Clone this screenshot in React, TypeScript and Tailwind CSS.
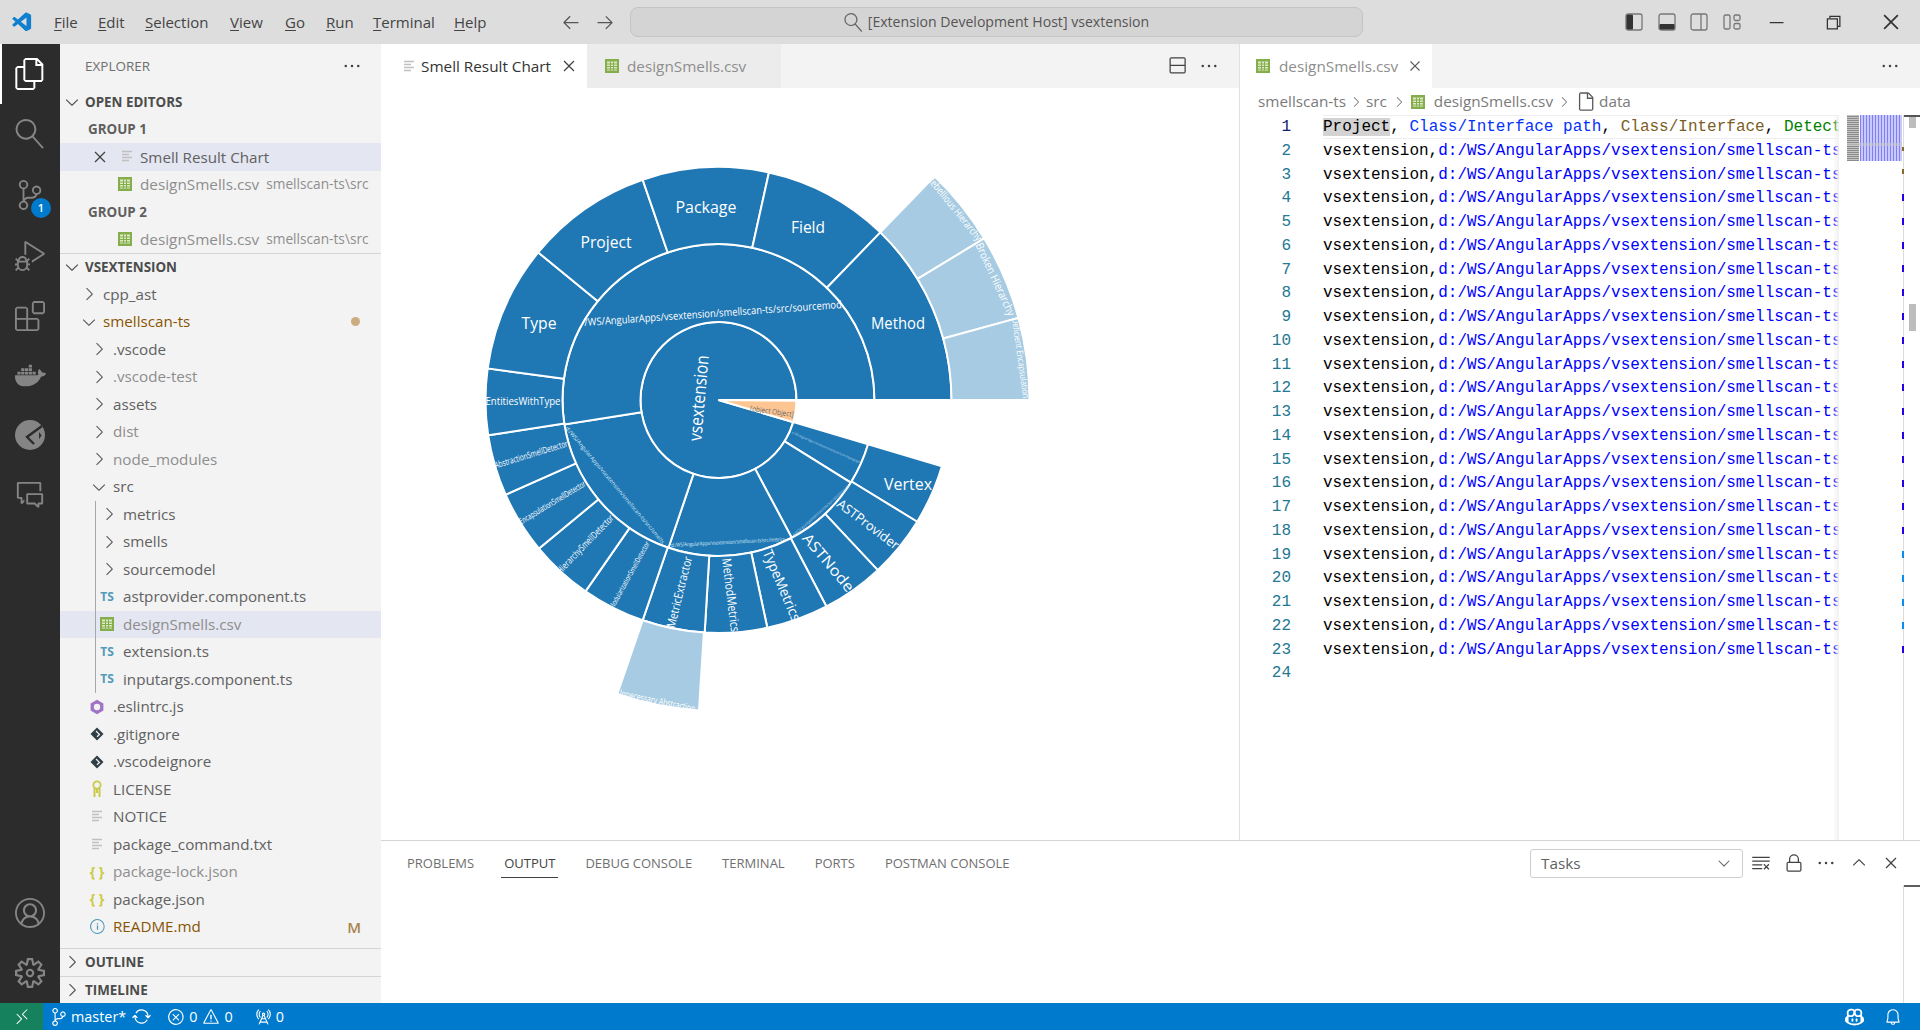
import React from 'react';
import {
  VscVscode, VscFiles, VscSearch, VscSourceControl, VscDebugAlt, VscExtensions, VscAccount, VscSettingsGear,
  VscChevronRight, VscChevronDown, VscChevronUp, VscClose, VscEllipsis, VscArrowLeft, VscArrowRight,
  VscChromeMinimize, VscChromeRestore, VscChromeClose, VscSplitVertical, VscLock, VscClearAll, VscRemote,
  VscSync, VscError, VscWarning, VscRadioTower, VscBell, VscCopilot, VscFile, VscCommentDiscussion, VscInfo,
} from 'react-icons/vsc';
import { FaDocker } from 'react-icons/fa';

const ui = "font-['Open_Sans',sans-serif]";

const CsvIcon = () => (
  <svg width="14" height="14" viewBox="0 0 14 14" className="shrink-0">
    <rect width="14" height="14" fill="#84ad4b" />
    <rect x="2" y="2.5" width="10" height="9" fill="#dfe9c8" />
    <path d="M2 5h10M2 7.5h10M2 10h10M5.5 2.5v9M8.5 2.5v9" stroke="#84ad4b" strokeWidth="1" />
  </svg>
);

const LinesIcon = () => (
  <svg width="12" height="13" viewBox="0 0 12 13" className="shrink-0">
    <path d="M1 1.5h10M1 4.5h7M1 7.5h10M1 10.5h7" stroke="#c0c0c0" strokeWidth="1.6" />
  </svg>
);

const TsIcon = () => <span className="text-[12px] font-bold leading-none text-[#519aba]">TS</span>;
const JsonIcon = () => <span className="text-[14px] font-bold leading-none text-[#cbcb41]">{'{ }'}</span>;

const GitIcon = () => (
  <svg width="14" height="14" viewBox="0 0 14 14">
    <path d="M7 0.5L13.5 7 7 13.5 0.5 7z" fill="#2f3d44" />
    <path d="M6 4l3.5 3.5L7 9.8" stroke="#f3f3f3" strokeWidth="1.2" fill="none" />
  </svg>
);

const EslintIcon = () => (
  <svg width="16" height="16" viewBox="0 0 16 16">
    <path d="M8 0.8L14.4 4.4V11.6L8 15.2 1.6 11.6V4.4z" fill="#a074c4" />
    <circle cx="8" cy="8" r="3.2" fill="#f3f3f3" />
  </svg>
);

const KeyIcon = () => (
  <svg width="12" height="18" viewBox="0 0 12 18">
    <circle cx="6" cy="5" r="3.6" fill="none" stroke="#c9c94a" strokeWidth="1.8" />
    <path d="M3.5 8v9M8.5 8v9M6 8v5" stroke="#c9c94a" strokeWidth="2" />
  </svg>
);

// activity bar glyphs the icon set does not carry
const PostmanIcon = () => (
  <svg width="30" height="30" viewBox="0 0 30 30">
    <circle cx="15" cy="15" r="15" fill="#858585" />
    <path d="M27 6L12 17l7 7" stroke="#2c2c2c" strokeWidth="2.4" fill="none" />
    <path d="M24 12l2.6 3.5L24 19z" fill="#2c2c2c" />
  </svg>
);

const LayoutIcon = ({ kind }: { kind: 'left' | 'bottom' | 'right' | 'custom' }) => (
  <svg width="18" height="18" viewBox="0 0 18 18">
    {kind === 'custom' ? (
      <>
        <rect x="1" y="2" width="6" height="14" rx="1.5" fill="none" stroke="#777" strokeWidth="1.3" />
        <rect x="11" y="2" width="6" height="5.5" rx="1.5" fill="none" stroke="#777" strokeWidth="1.3" />
        <rect x="11" y="10.5" width="6" height="5.5" rx="1.5" fill="none" stroke="#777" strokeWidth="1.3" />
      </>
    ) : (
      <>
        {kind === 'left' && <rect x="1" y="1" width="7" height="16" rx="1.5" fill="#333" />}
        {kind === 'bottom' && <rect x="1" y="11" width="16" height="6" rx="1.5" fill="#333" />}
        <rect x="1" y="1" width="16" height="16" rx="2" fill="none" stroke="#777" strokeWidth="1.3" />
        {kind === 'right' && <path d="M11 1v16" stroke="#777" strokeWidth="1.3" />}
      </>
    )}
  </svg>
);

const menus = [
  { k: 'F', r: 'ile', w: 'w-[44px]' },
  { k: 'E', r: 'dit', w: 'w-[47px]' },
  { k: 'S', r: 'election', w: 'w-[85px]' },
  { k: 'V', r: 'iew', w: 'w-[55px]' },
  { k: 'G', r: 'o', w: 'w-[41px]' },
  { k: 'R', r: 'un', w: 'w-[47px]' },
  { k: 'T', r: 'erminal', w: 'w-[81px]' },
  { k: 'H', r: 'elp', w: 'w-[40px]' },
];

const TitleBar = () => (
  <div className="flex h-[44px] shrink-0 items-center bg-[#dddddd] text-[15px] text-[#444444]">
    <div className="flex w-[54px] shrink-0 justify-center pr-[10px]">
      <VscVscode size={23} className="text-[#0f7fd0]" />
    </div>
    {menus.map(m => (
      <div key={m.k} className={`${m.w} shrink-0`}>
        <span className="underline underline-offset-2">{m.k}</span>
        {m.r}
      </div>
    ))}
    <div className="ml-[60px] flex w-[34px] shrink-0 justify-center">
      <VscArrowLeft size={20} className="text-[#555]" />
    </div>
    <div className="flex w-[34px] shrink-0 justify-center">
      <VscArrowRight size={20} className="text-[#555]" />
    </div>
    <div className="ml-[8px] flex h-[30px] w-[733px] shrink-0 items-center justify-center gap-[5px] rounded-lg border border-[#c4c4c4] bg-[#d4d4d4] text-[14.1px] text-[#555]">
      <VscSearch size={19} className="-scale-x-100 text-[#666]" />
      <span>[Extension Development Host] vsextension</span>
    </div>
    <div className="ml-auto flex h-full items-center">
      <div className="mr-[7px] flex w-[116px] justify-between">
        <LayoutIcon kind="left" />
        <LayoutIcon kind="bottom" />
        <LayoutIcon kind="right" />
        <LayoutIcon kind="custom" />
      </div>
      <div className="flex w-[56px] justify-center"><VscChromeMinimize size={20} className="text-[#333]" /></div>
      <div className="flex w-[58px] justify-center"><VscChromeRestore size={20} className="text-[#333]" /></div>
      <div className="flex w-[58px] justify-center"><VscChromeClose size={22} className="text-[#333]" /></div>
    </div>
  </div>
);

const ActivityBar = () => (
  <div className="flex w-[60px] shrink-0 flex-col items-center bg-[#2c2c2c] text-[#858585]">
    <div className="flex h-[60px] w-full items-center justify-center border-l-2 border-white pr-[2px] text-white">
      <VscFiles size={32} />
    </div>
    <div className="flex h-[60px] items-center justify-center"><VscSearch size={30} className="-scale-x-100" /></div>
    <div className="relative flex h-[62px] items-center justify-center">
      <VscSourceControl size={30} />
      <span className="absolute right-[-6px] bottom-[8px] flex h-[20px] w-[20px] items-center justify-center rounded-full bg-[#007acc] text-[11px] font-semibold text-white">1</span>
    </div>
    <div className="flex h-[60px] items-center justify-center"><VscDebugAlt size={30} /></div>
    <div className="flex h-[60px] items-center justify-center"><VscExtensions size={30} /></div>
    <div className="flex h-[58px] items-center justify-center"><FaDocker size={31} /></div>
    <div className="flex h-[62px] items-center justify-center"><PostmanIcon /></div>
    <div className="flex h-[58px] items-center justify-center"><VscCommentDiscussion size={30} /></div>
    <div className="mt-auto flex h-[60px] items-center justify-center"><VscAccount size={30} /></div>
    <div className="flex h-[60px] items-center justify-center"><VscSettingsGear size={30} /></div>
  </div>
);

type TreeItem = {
  name: string;
  pad: string;
  chevron?: 'open' | 'closed';
  icon?: React.ReactNode;
  text?: string;
  bg?: string;
  badge?: React.ReactNode;
};

const gray = 'text-[#8e8e8e]';
const mod = 'text-[#895503]';

const tree: TreeItem[] = [
  { name: 'cpp_ast', pad: 'pl-[19px]', chevron: 'closed' },
  { name: 'smellscan-ts', pad: 'pl-[19px]', chevron: 'open', text: mod, badge: <span className="mr-[21px] h-[9px] w-[9px] rounded-full bg-[#c9ac80]" /> },
  { name: '.vscode', pad: 'pl-[29px]', chevron: 'closed' },
  { name: '.vscode-test', pad: 'pl-[29px]', chevron: 'closed', text: gray },
  { name: 'assets', pad: 'pl-[29px]', chevron: 'closed' },
  { name: 'dist', pad: 'pl-[29px]', chevron: 'closed', text: gray },
  { name: 'node_modules', pad: 'pl-[29px]', chevron: 'closed', text: gray },
  { name: 'src', pad: 'pl-[29px]', chevron: 'open' },
  { name: 'metrics', pad: 'pl-[39px]', chevron: 'closed' },
  { name: 'smells', pad: 'pl-[39px]', chevron: 'closed' },
  { name: 'sourcemodel', pad: 'pl-[39px]', chevron: 'closed' },
  { name: 'astprovider.component.ts', pad: 'pl-[37px]', icon: <TsIcon /> },
  { name: 'designSmells.csv', pad: 'pl-[37px]', icon: <CsvIcon />, text: gray, bg: 'bg-[#e4e6f1]' },
  { name: 'extension.ts', pad: 'pl-[37px]', icon: <TsIcon /> },
  { name: 'inputargs.component.ts', pad: 'pl-[37px]', icon: <TsIcon /> },
  { name: '.eslintrc.js', pad: 'pl-[27px]', icon: <EslintIcon /> },
  { name: '.gitignore', pad: 'pl-[27px]', icon: <GitIcon /> },
  { name: '.vscodeignore', pad: 'pl-[27px]', icon: <GitIcon /> },
  { name: 'LICENSE', pad: 'pl-[27px]', icon: <KeyIcon /> },
  { name: 'NOTICE', pad: 'pl-[27px]', icon: <LinesIcon /> },
  { name: 'package_command.txt', pad: 'pl-[27px]', icon: <LinesIcon /> },
  { name: 'package-lock.json', pad: 'pl-[27px]', icon: <JsonIcon />, text: gray },
  { name: 'package.json', pad: 'pl-[27px]', icon: <JsonIcon /> },
  { name: 'README.md', pad: 'pl-[27px]', icon: <VscInfo size={17} className="text-[#519aba]" />, text: mod, badge: <span className="mr-[20px] text-[15px] font-semibold text-[#a8834f]">M</span> },
];

const SectionHeader = ({ title, open, border }: { title: string; open?: boolean; border?: boolean }) => (
  <div className={`flex h-[27.5px] shrink-0 items-center pl-[2px] text-[13.4px] font-bold text-[#4c4c4c] ${border ? 'border-t border-[#d4d4d4]' : ''}`}>
    {open ? <VscChevronDown size={20} /> : <VscChevronRight size={20} />}
    <span className="ml-[3px]">{title}</span>
  </div>
);

const GroupLabel = ({ title }: { title: string }) => (
  <div className="flex h-[27.5px] shrink-0 items-center pl-[28px] text-[13.4px] font-bold text-[#5f5f5f]">{title}</div>
);

const OpenCsvRow = () => (
  <div className="flex h-[27.5px] shrink-0 items-center pl-[58px] text-[15.3px] text-[#8e8e8e]">
    <CsvIcon />
    <span className="ml-[8px] whitespace-nowrap">designSmells.csv</span>
    <span className="ml-[7px] whitespace-nowrap text-[13.7px]">smellscan-ts\src</span>
  </div>
);

const Sidebar = () => (
  <div className="flex w-[321px] shrink-0 flex-col overflow-hidden bg-[#f3f3f3] text-[15.2px] text-[#616161]">
    <div className="flex h-[44px] shrink-0 items-center justify-between pr-[19px] pl-[25px] text-[13.5px] text-[#6f6f6f]">
      <span>EXPLORER</span>
      <VscEllipsis size={20} className="text-[#424242]" />
    </div>
    <SectionHeader title="OPEN EDITORS" open />
    <GroupLabel title="GROUP 1" />
    <div className="flex h-[27.5px] shrink-0 items-center bg-[#e4e6f1] pl-[30px]">
      <VscClose size={20} className="text-[#424242]" />
      <span className="ml-[11px]"><LinesIcon /></span>
      <span className="ml-[7px] pt-[1px]">Smell Result Chart</span>
    </div>
    <OpenCsvRow />
    <GroupLabel title="GROUP 2" />
    <OpenCsvRow />
    <SectionHeader title="VSEXTENSION" open border />
    <div className="relative flex min-h-0 flex-1 flex-col overflow-hidden">
      <div className="absolute top-[220px] left-[35px] h-[192px] w-px bg-[#a8a8a8]" />
      {tree.map(row => (
        <div key={row.name} className={`flex h-[27.5px] shrink-0 items-center ${row.pad} ${row.bg ?? ''} ${row.text ?? ''}`}>
          <span className="flex w-[20px] shrink-0 justify-center text-[#5a5a5a]">
            {row.chevron === 'open' && <VscChevronDown size={20} />}
            {row.chevron === 'closed' && <VscChevronRight size={20} />}
            {row.icon}
          </span>
          <span className={`whitespace-nowrap ${row.chevron ? 'ml-[4px]' : 'ml-[6px]'}`}>{row.name}</span>
          {row.badge && <span className="ml-auto flex items-center">{row.badge}</span>}
        </div>
      ))}
    </div>
    <SectionHeader title="OUTLINE" border />
    <SectionHeader title="TIMELINE" border />
  </div>
);

// Sunburst geometry, in page coordinates (the svg's viewBox starts at the chart's page offset)
const CX = 718.5;
const CY = 400;

const wedge = (r0: number, r1: number, a0: number, a1: number) => {
  const rad = (d: number) => (d * Math.PI) / 180;
  const pt = (r: number, a: number) => `${(CX + r * Math.cos(rad(a))).toFixed(2)} ${(CY + r * Math.sin(rad(a))).toFixed(2)}`;
  const large = a1 - a0 > 180 ? 1 : 0;
  if (r0 === 0) return `M${CX} ${CY}L${pt(r1, a0)}A${r1} ${r1} 0 ${large} 1 ${pt(r1, a1)}Z`;
  return `M${pt(r0, a0)}L${pt(r1, a0)}A${r1} ${r1} 0 ${large} 1 ${pt(r1, a1)}L${pt(r0, a1)}A${r0} ${r0} 0 ${large} 0 ${pt(r0, a0)}Z`;
};

const BLUE = '#1f77b4';
const LIGHT = '#a6cbe2';

const ring2 = [[16.5, 32], [32, 62], [62, 108.7], [108.7, 171], [171, 360]];
const ring3 = [16.5, 31.5, 46.9, 62.4, 77.9, 93.4, 109, 124.8, 140.4, 156, 171.3, 187.8, 219.3, 251, 282.5, 314, 360];
const ring4 = [[93.6, 109], [314, 328.7], [328.7, 344.7], [344.7, 360]];

type Label = { t: string; x: number; y: number; r: number; s: number; w: number; f?: string };

const labels: Label[] = [
  { t: 'Package', x: 706, y: 207, r: 0, s: 16, w: 61 },
  { t: 'Project', x: 606, y: 242, r: 0, s: 16, w: 51 },
  { t: 'Field', x: 808, y: 227, r: 0, s: 16, w: 34 },
  { t: 'Type', x: 539, y: 323, r: 0, s: 16, w: 35 },
  { t: 'Method', x: 898, y: 323, r: 0, s: 16, w: 54 },
  { t: 'EntitiesWithType', x: 523, y: 400.5, r: 0, s: 10.5, w: 75 },
  { t: '/WS/AngularApps/vsextension/smellscan-ts/src/sourcemod', x: 713, y: 313, r: -4, s: 10.5, w: 258 },
  { t: 'vsextension', x: 698, y: 398, r: -85, s: 18, w: 86 },
  { t: '[object Object]', x: 772, y: 411, r: 8, s: 7.5, w: 44, f: '#666' },
  { t: 'Rebellious Hierarchy', x: 955, y: 208, r: 51, s: 10, w: 80 },
  { t: 'Broken Hierarchy', x: 996, y: 279, r: 65, s: 11, w: 79 },
  { t: 'Deficient Encapsulation', x: 1021, y: 358, r: 82, s: 9, w: 81 },
  { t: 'Unnecessary Abstraction', x: 656, y: 700, r: 12, s: 10, w: 80 },
  { t: 'Vertex', x: 908, y: 483, r: 0, s: 17, w: 48 },
  { t: 'ASTProvider', x: 868.5, y: 524, r: 37, s: 13, w: 74 },
  { t: 'ASTNode', x: 829, y: 562, r: 50, s: 15, w: 71 },
  { t: 'TypeMetrics', x: 782.5, y: 585, r: 67, s: 14, w: 76 },
  { t: 'MethodMetrics', x: 731, y: 595, r: 83, s: 12.5, w: 74 },
  { t: 'MetricExtractor', x: 679, y: 592, r: -76, s: 12, w: 73 },
  { t: 'AbstractionSmellDetector', x: 531, y: 454, r: -17, s: 9, w: 76 },
  { t: 'EncapsulationSmellDetector', x: 552, y: 502, r: -31, s: 8.5, w: 76 },
  { t: 'HierarchySmellDetector', x: 585, y: 544, r: -46, s: 9.5, w: 77 },
  { t: 'ModularizationSmellDetector', x: 629, y: 575, r: -61, s: 7.5, w: 76 },
  { t: 'd:/WS/AngularApps/vsextension/smellscan-ts/src/smells', x: 615, y: 485, r: 50, s: 5.5, w: 151, f: '#dcebf5' },
  { t: 'd:/WS/AngularApps/vsextension/smellscan-ts/src/metrics', x: 728, y: 542, r: -3, s: 5.5, w: 114, f: '#dcebf5' },
  { t: 'd:/WS/AngularApps/vsextension/smellscan-ts/src/astprovider', x: 821, y: 510, r: -42, s: 4.5, w: 75, f: '#b5d3e8' },
  { t: 'd:/WS/AngularApps/vsextension/smellscan-ts/src/hypergraph', x: 826, y: 447, r: 23.7, s: 3.5, w: 74, f: '#b5d3e8' },
];

const Sunburst = () => (
  <svg viewBox="381 88 858 752" className="h-full w-full font-['Open_Sans',sans-serif]">
    <g stroke="#ffffff" strokeWidth="2">
      <path d={wedge(0, 78, 16.5, 360)} fill={BLUE} />
      <path d={wedge(0, 78, 0.5, 16.5)} fill="#fdc592" />
      {ring2.map(([a, b]) => <path key={a} d={wedge(78, 156, a, b)} fill={BLUE} />)}
      {ring3.slice(0, -1).map((a, i) => <path key={a} d={wedge(156, 233, a, ring3[i + 1])} fill={BLUE} />)}
      {ring4.map(([a, b]) => <path key={a} d={wedge(233, 311, a, b)} fill={LIGHT} />)}
    </g>
    {labels.map(l => (
      <text
        key={l.t}
        x={l.x}
        y={l.y}
        fontSize={l.s}
        fill={l.f ?? '#ffffff'}
        textAnchor="middle"
        dominantBaseline="central"
        textLength={l.w}
        lengthAdjust="spacingAndGlyphs"
        transform={`rotate(${l.r} ${l.x} ${l.y})`}
      >
        {l.t}
      </text>
    ))}
  </svg>
);

const ChartGroup = () => (
  <div className="flex w-[858px] shrink-0 flex-col">
    <div className="flex h-[44px] shrink-0 items-center bg-[#f3f3f3] text-[15.3px]">
      <div className="flex h-full w-[206px] items-center bg-white pl-[22px] text-[#333333]">
        <LinesIcon />
        <span className="ml-[6px] whitespace-nowrap">Smell Result Chart</span>
        <VscClose size={20} className="ml-auto mr-[8px] text-[#424242]" />
      </div>
      <div className="flex h-full w-[194px] items-center bg-[#ececec] pl-[18px] text-[#8e8e8e]">
        <CsvIcon />
        <span className="ml-[8px] whitespace-nowrap">designSmells.csv</span>
      </div>
      <div className="ml-auto flex items-center gap-[12px] pr-[20px] text-[#424242]">
        <VscSplitVertical size={20} />
        <VscEllipsis size={20} />
      </div>
    </div>
    <div className="min-h-0 flex-1 bg-white">
      <Sunburst />
    </div>
  </div>
);

const lineNumbers = Array.from({ length: 24 }, (_, i) => i + 1);
const rulerTicks = lineNumbers.slice(0, 20);

const CsvGroup = () => (
  <div className="flex min-w-0 flex-1 flex-col border-l border-[#e0e0e0]">
    <div className="flex h-[44px] shrink-0 items-center bg-[#f3f3f3] text-[15.3px]">
      <div className="flex h-full w-[192px] items-center bg-white pl-[16px] text-[#8e8e8e]">
        <CsvIcon />
        <span className="ml-[9px] whitespace-nowrap">designSmells.csv</span>
        <VscClose size={18} className="ml-auto mr-[8px] text-[#555]" />
      </div>
      <VscEllipsis size={20} className="ml-auto mr-[20px] text-[#424242]" />
    </div>
    <div className="flex h-[27px] shrink-0 items-center pl-[18px] text-[15.3px] text-[#7a7a7a]">
      <span>smellscan-ts</span>
      <VscChevronRight size={16} className="mx-[2px]" />
      <span>src</span>
      <VscChevronRight size={16} className="mx-[4px]" />
      <CsvIcon />
      <span className="ml-[9px]">designSmells.csv</span>
      <VscChevronRight size={16} className="mx-[3px]" />
      <VscFile size={21} className="text-[#5a5a5a]" />
      <span className="ml-[3px]">data</span>
    </div>
    <div className="relative flex min-h-0 flex-1 overflow-hidden font-['Liberation_Mono',monospace] text-[16px] leading-[25.5px]">
      <div className="w-[51px] shrink-0 text-right text-[#237893]">
        {lineNumbers.map(n => (
          <div key={n} className={`h-[23.75px] ${n === 1 ? 'text-[#0b216f]' : ''}`}>{n}</div>
        ))}
      </div>
      <div className="ml-[32px] w-[516px] shrink-0 overflow-hidden whitespace-pre text-black">
        <div className="-mr-[20px] h-[23.75px] border-y border-[#eeeeee] leading-[23.5px]">
          <span className="bg-[#d3d3d3]">Project</span>,{' '}
          <span className="text-[#0431fa]">Class/Interface path</span>,{' '}
          <span className="text-[#795e26]">Class/Interface</span>,{' '}
          <span className="text-[#008000]">Detect</span>
        </div>
        {lineNumbers.slice(1, 23).map(n => (
          <div key={n} className="h-[23.75px]">
            vsextension,<span className="text-[#0000ff]">d:/WS/AngularApps/vsextension/smellscan-ts</span>
          </div>
        ))}
      </div>
      <div className="absolute top-0 bottom-0 left-[593px] w-[6px] bg-gradient-to-r from-transparent to-[#f0f0f0]" />
      {/* minimap */}
      <div className="relative ml-[8px] flex h-[46px] w-[55px] shrink-0">
        <div className="w-[12px] bg-[repeating-linear-gradient(0deg,#8c8c8c_0,#8c8c8c_1px,#c4c4c4_1px,#c4c4c4_2px)]" />
        <div className="w-[1px] bg-white" />
        <div className="flex-1 bg-[repeating-linear-gradient(90deg,#7f7ff5_0,#7f7ff5_1px,#c9c9fb_1px,#c9c9fb_3px)]" />
        <div className="absolute top-[28px] right-0 left-0 h-[3px] bg-[#c8c8c8]/60" />
      </div>
      {/* overview ruler */}
      <div className="relative ml-[1px] w-[17px] shrink-0 border-l border-[#dcdcdc]">
        <div className="h-[2px] bg-[#555555]" />
        <div className="absolute top-[2px] left-[5px] h-[11px] w-[7px] bg-[#bdbdbd]" />
        <div className="absolute top-[189px] left-[5px] h-[27px] w-[7px] bg-[#bdbdbd]" />
        <div className="absolute top-[32px] left-[-2px] h-[4px] w-[1.5px] bg-[#8a6a2a]" />
        <div className="absolute top-[54px] left-[-2px] h-[5px] w-[1.5px] bg-[#8a6a2a]" />
        {rulerTicks.map(n => (
          <div
            key={n}
            className={`absolute left-[-2px] h-[7px] w-[1.5px] ${n >= 16 && n <= 19 ? 'bg-[#0a8cf0]' : 'bg-[#2200ee]'}`}
            style={{ top: 79 + (n - 1) * 23.8 }}
          />
        ))}
      </div>
    </div>
  </div>
);

const panelTabs = ['PROBLEMS', 'OUTPUT', 'DEBUG CONSOLE', 'TERMINAL', 'PORTS', 'POSTMAN CONSOLE'];

const Panel = () => (
  <div className="flex min-h-0 flex-1 flex-col border-t border-[#d4d4d4] bg-white">
    <div className="flex h-[44px] shrink-0 items-center pl-[26px] text-[13px] text-[#6f6f6f]">
      {panelTabs.map(t => (
        <div key={t} className={`relative mr-[30px] flex h-full items-center whitespace-nowrap pt-[1px] ${t === 'OUTPUT' ? 'text-[#424242]' : ''}`}>
          {t}
          {t === 'OUTPUT' && <div className="absolute right-[-3px] bottom-[7px] left-[-3px] h-[1.5px] bg-[#424242]" />}
        </div>
      ))}
      <div className="ml-auto flex items-center text-[#424242]">
        <div className="flex h-[29px] w-[213px] items-center justify-between rounded-[3px] border border-[#cecece] pr-[9px] pl-[10px] text-[15.3px] text-[#616161]">
          <span className="pt-[1px]">Tasks</span>
          <VscChevronDown size={18} />
        </div>
        <div className="ml-[8px] flex w-[169px] items-center justify-between pr-[19px]">
          <VscClearAll size={20} />
          <VscLock size={20} />
          <VscEllipsis size={20} />
          <VscChevronUp size={20} />
          <VscClose size={20} />
        </div>
      </div>
    </div>
    <div className="relative min-h-0 flex-1">
      <div className="absolute top-0 right-0 bottom-0 w-[17px] border-l border-[#dcdcdc]">
        <div className="h-[1.5px] bg-[#5f5f5f]" />
      </div>
    </div>
  </div>
);

const StatusBar = () => (
  <div className="flex h-[27px] shrink-0 items-center bg-[#007acc] text-[14.4px] text-white">
    <div className="flex h-full w-[43px] items-center justify-center bg-[#16825d]">
      <VscRemote size={18} />
    </div>
    <VscSourceControl size={18} className="ml-[7px]" />
    <span className="ml-[3px]">master*</span>
    <VscSync size={19} className="ml-[6px]" />
    <VscError size={18} className="ml-[16px]" />
    <span className="ml-[4px]">0</span>
    <VscWarning size={18} className="ml-[5px]" />
    <span className="ml-[4px]">0</span>
    <VscRadioTower size={18} className="ml-[21px]" />
    <span className="ml-[4px]">0</span>
    <div className="ml-auto flex items-center gap-[20px] pr-[18px]">
      <VscCopilot size={19} />
      <VscBell size={18} />
    </div>
  </div>
);

const App: React.FC = () => (
  <div className={`flex h-[1030px] w-[1920px] flex-col overflow-hidden bg-white ${ui}`}>
    <TitleBar />
    <div className="flex min-h-0 flex-1">
      <ActivityBar />
      <Sidebar />
      <div className="flex min-w-0 flex-1 flex-col">
        <div className="flex h-[796px] shrink-0">
          <ChartGroup />
          <CsvGroup />
        </div>
        <Panel />
      </div>
    </div>
    <StatusBar />
  </div>
);

export default App;
